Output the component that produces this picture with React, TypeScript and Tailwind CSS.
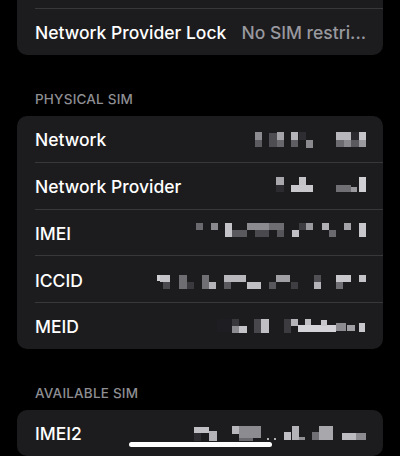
import React from 'react';

type Block = [number, number, number, number, string];

interface Row {
  label: string;
  value?: string;
  blocks?: Block[];
}

// pixelated (censored) values, in page coordinates; right edge at x=367
const networkBlocks: Block[] = [
  [256, 133, 7, 8, '#8c8c90'], [256, 141, 7, 7, '#5c5c60'],
  [270, 134, 8, 14, '#4e4e52'], [278, 133, 7, 8, '#a4a4a8'], [278, 141, 7, 7, '#68686c'],
  [292, 133, 7, 8, '#b4b4b8'], [292, 141, 7, 7, '#5e5e62'], [300, 133, 7, 8, '#2e2e32'],
  [307, 141, 7, 8, '#8a8a8e'],
  [337, 133, 15, 8, '#b8b8bc'], [352, 133, 8, 8, '#2a2a2e'], [360, 133, 7, 8, '#c4c4c8'],
  [337, 141, 8, 7, '#6c6c70'], [345, 141, 7, 7, '#8a8a8e'], [352, 141, 8, 7, '#5a5a5e'], [360, 141, 7, 7, '#9a9a9e'],
];

const providerBlocks: Block[] = [
  [277, 178, 8, 8, '#a8a8ac'], [277, 186, 8, 7, '#2c2c30'],
  [300, 178, 7, 8, '#c4c4c8'], [292, 186, 22, 7, '#c8c8cc'],
  [337, 186, 15, 7, '#707074'], [352, 188, 6, 5, '#9a9a9e'], [360, 178, 7, 15, '#d0d0d4'],
];

const imeiBlocks: Block[] = [
  [197, 224, 7, 7, '#6a6a6e'], [212, 224, 7, 7, '#8a8a8e'],
  [226, 224, 7, 14, '#c4c4c8'], [233, 231, 15, 7, '#5a5a5e'],
  [248, 224, 22, 7, '#8c8c90'], [256, 231, 14, 7, '#4a4a4e'],
  [270, 224, 15, 7, '#6e6e72'], [278, 231, 7, 7, '#56565a'],
  [293, 231, 7, 7, '#c0c0c4'], [300, 224, 7, 7, '#3e3e42'], [307, 224, 7, 7, '#9a9a9e'],
  [323, 224, 7, 7, '#b0b0b4'], [330, 231, 7, 7, '#6a6a6e'],
  [345, 224, 7, 7, '#a4a4a8'], [360, 224, 7, 14, '#c8c8cc'],
];

const iccidBlocks: Block[] = [
  [158, 276, 6, 6, '#d0d0d4'], [161, 276, 10, 7, '#c4c4c8'], [164, 283, 7, 7, '#4a4a4e'],
  [180, 276, 8, 14, '#6e6e72'], [188, 283, 7, 7, '#3a3a3e'],
  [203, 276, 7, 14, '#707074'], [210, 283, 7, 7, '#b4b4b8'],
  [225, 276, 22, 7, '#b8b8bc'], [225, 283, 7, 7, '#5a5a5e'], [248, 283, 14, 7, '#c0c0c4'],
  [270, 283, 7, 7, '#58585c'], [277, 276, 14, 7, '#a0a0a4'], [292, 283, 7, 7, '#3e3e42'],
  [315, 276, 7, 7, '#505054'], [315, 283, 7, 7, '#b4b4b8'],
  [337, 276, 15, 7, '#c8c8cc'], [337, 283, 7, 7, '#707074'],
  [360, 276, 7, 7, '#c4c4c8'],
];

const meidBlocks: Block[] = [
  [218, 320, 15, 13, '#1e1e22'], [233, 320, 7, 7, '#38383c'], [233, 327, 7, 7, '#8c8c90'],
  [240, 327, 8, 7, '#c4c4c8'], [255, 320, 7, 14, '#48484c'], [262, 320, 8, 14, '#c0c0c4'],
  [285, 320, 7, 14, '#3c3c40'], [292, 320, 7, 7, '#b4b4b8'],
  [299, 326, 38, 7, '#d4d4d8'], [306, 320, 6, 6, '#c0c0c4'], [322, 321, 6, 6, '#c8c8cc'],
  [337, 324, 10, 8, '#8c8c90'], [348, 326, 8, 6, '#a0a0a4'], [360, 324, 6, 9, '#c8c8cc'],
];

const imei2Blocks: Block[] = [
  [195, 424, 15, 6, '#c0c0c4'], [195, 430, 7, 8, '#2e2e32'], [210, 428, 8, 10, '#b4b4b8'],
  [233, 423, 7, 8, '#b8b8bc'], [240, 423, 22, 12, '#8c8c90'], [240, 435, 14, 3, '#6a6a6e'],
  [268, 435, 2, 2, '#b0b0b4'], [275, 435, 2, 2, '#b0b0b4'],
  [285, 429, 7, 8, '#c0c0c4'], [293, 423, 7, 14, '#b4b4b8'], [300, 434, 6, 3, '#909094'],
  [313, 429, 8, 8, '#707074'], [320, 423, 14, 14, '#a8a8ac'],
  [343, 430, 14, 7, '#bcbcc0'], [357, 430, 10, 7, '#8c8c90'],
];

const Pixelated = ({ blocks, top }: { blocks: Block[]; top: number }) => {
  const minX = Math.min(...blocks.map((b) => b[0])) - 1;
  const w = 367 - minX;
  return (
    <svg width={w} height={24} viewBox={`${minX} ${top} ${w} 24`} className="shrink-0">
      {blocks.map(([x, y, bw, bh, c], i) => (
        <rect key={i} x={x} y={y} width={bw} height={bh} fill={c} />
      ))}
    </svg>
  );
};

const Card = ({
  rows,
  tops,
  cutTop,
}: {
  rows: Row[];
  tops?: number[];
  cutTop?: boolean;
}) => (
  <div className={`mx-[17px] bg-[#1c1c1e] overflow-hidden ${cutTop ? 'rounded-b-[10px] pt-[8px]' : 'rounded-[10px]'}`}>
    {rows.map((row, i) => (
      <div key={row.label} className="pl-[18px]">
        <div
          className={`h-[46.6px] flex items-center justify-between pr-[17px] ${i > 0 || cutTop ? 'border-t border-[#38383a]' : ''}`}
        >
          <span className="text-[17.5px] font-medium text-white whitespace-nowrap pt-[3px]">{row.label}</span>
          {row.value && (
            <span className="text-[17.5px] font-medium text-[#98989e] whitespace-nowrap pt-[3px]">{row.value}</span>
          )}
          {row.blocks && tops && <Pixelated blocks={row.blocks} top={tops[i]} />}
        </div>
      </div>
    ))}
  </div>
);

const SectionHeader = ({ title }: { title: string }) => (
  <div className="h-[61px] flex items-end px-[35px] pb-[6px]">
    <span className="text-[13.5px] font-medium text-[#8e8e93] tracking-[0.2px]">{title}</span>
  </div>
);

export default function App() {
  return (
    <div
      className="relative w-[400px] h-[456px] overflow-hidden bg-black"
      style={{ fontFamily: 'Inter, "Noto Sans", sans-serif' }}
    >
      <Card cutTop rows={[{ label: 'Network Provider Lock', value: 'No SIM restri...' }]} />

      <SectionHeader title="PHYSICAL SIM" />
      <Card
        rows={[
          { label: 'Network', blocks: networkBlocks },
          { label: 'Network Provider', blocks: providerBlocks },
          { label: 'IMEI', blocks: imeiBlocks },
          { label: 'ICCID', blocks: iccidBlocks },
          { label: 'MEID', blocks: meidBlocks },
        ]}
        tops={[128, 175, 222, 268, 315]}
      />

      <SectionHeader title="AVAILABLE SIM" />
      <Card rows={[{ label: 'IMEI2', blocks: imei2Blocks }]} tops={[418]} />

      <div className="absolute left-[129px] bottom-[9px] w-[143px] h-[5px] rounded-full bg-white" />
    </div>
  );
}
